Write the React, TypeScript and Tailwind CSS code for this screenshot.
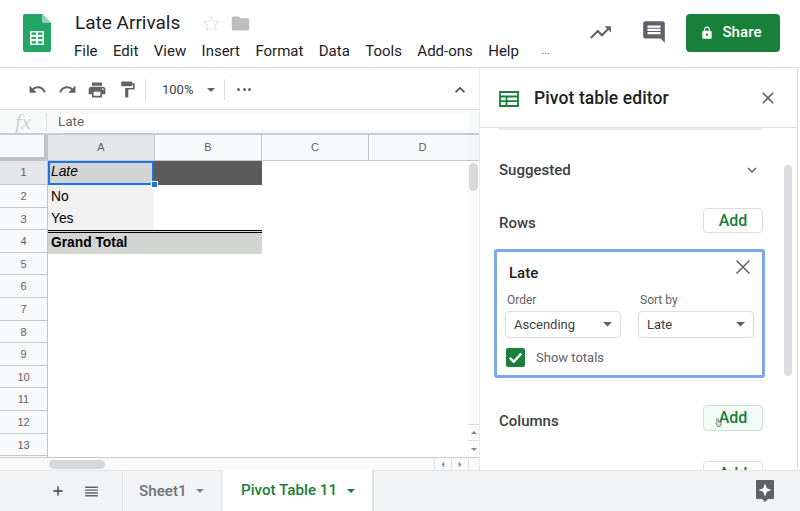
import React from "react";

const Ico = ({ d, className }: { d: string; className: string }) => (
  <svg viewBox="0 0 24 24" fill="currentColor" className={className}>
    <path d={d} />
  </svg>
);

const P = {
  undo: "M12.5 8c-2.65 0-5.05.99-6.9 2.6L2 7v9h9l-3.62-3.62c1.39-1.16 3.16-1.88 5.12-1.88 3.54 0 6.55 2.31 7.6 5.5l2.37-.78C21.08 11.03 17.15 8 12.5 8z",
  redo: "M18.4 10.6C16.55 8.99 14.15 8 11.5 8c-4.65 0-8.58 3.03-9.96 7.22L3.9 16c1.05-3.19 4.05-5.5 7.6-5.5 1.95 0 3.73.72 5.12 1.88L13 16h9V7l-3.6 3.6z",
  print: "M19 8H5c-1.66 0-3 1.34-3 3v6h4v4h12v-4h4v-6c0-1.66-1.34-3-3-3zm-3 11H8v-5h8v5zm3-7c-.55 0-1-.45-1-1s.45-1 1-1 1 .45 1 1-.45 1-1 1zm-1-9H6v4h12V3z",
  paint: "M18 4V3c0-.55-.45-1-1-1H5c-.55 0-1 .45-1 1v4c0 .55.45 1 1 1h12c.55 0 1-.45 1-1V6h1v4H9v11c0 .55.45 1 1 1h2c.55 0 1-.45 1-1v-9h8V4h-3z",
  comment: "M21.99 4c0-1.1-.89-2-1.99-2H4c-1.1 0-2 .9-2 2v12c0 1.1.9 2 2 2h14l4 4-.01-18zM18 14H6v-2h12v2zm0-3H6V9h12v2zm0-3H6V6h12v2z",
  trend: "M16 6l2.29 2.29-4.88 4.88-4-4L2 16.59 3.41 18l6-6 4 4 6.3-6.29L22 12V6z",
  lock: "M18 8h-1V6c0-2.76-2.24-5-5-5S7 3.24 7 6v2H6c-1.1 0-2 .9-2 2v10c0 1.1.9 2 2 2h12c1.1 0 2-.9 2-2V10c0-1.1-.9-2-2-2zm-6 9c-1.1 0-2-.9-2-2s.9-2 2-2 2 .9 2 2-.9 2-2 2zm3.1-9H8.9V6c0-1.71 1.39-3.1 3.1-3.1 1.71 0 3.1 1.39 3.1 3.1v2z",
  folder: "M10 4H4c-1.1 0-2 .9-2 2v12c0 1.1.9 2 2 2h16c1.1 0 2-.9 2-2V8c0-1.1-.9-2-2-2h-8l-2-2z",
  close: "M19 6.41L17.59 5 12 10.59 6.41 5 5 6.41 10.59 12 5 17.59 6.41 19 12 13.41 17.59 19 19 17.59 13.41 12z",
  up: "M12 8l-6 6 1.41 1.41L12 10.83l4.59 4.58L18 14z",
  down: "M16.59 8.59L12 13.17 7.41 8.59 6 10l6 6 6-6z",
  plus: "M19 13h-6v6h-2v-6H5v-2h6V5h2v6h6v2z",
  list: "M3 5h18v2H3zM3 9h18v2H3zM3 13h18v2H3zM3 17h18v2H3z",
};

const Caret = ({ className }: { className: string }) => (
  <svg viewBox="0 0 10 5" fill="currentColor" className={className}>
    <path d="M0 0h10L5 5z" />
  </svg>
);

const SheetsLogo = () => (
  <svg viewBox="0 0 28 38" className="w-[28px] h-[38px]">
    <path d="M2 0h17l9 9v27a2 2 0 0 1-2 2H2a2 2 0 0 1-2-2V2a2 2 0 0 1 2-2z" fill="#22a565" />
    <path d="M19 0l9 9h-7a2 2 0 0 1-2-2z" fill="#8ed1b1" />
    <path d="M7 17h14v14H7z" fill="#f1f9f5" />
    <path d="M8.6 18.6h4.4v2.2H8.6zM15 18.6h4.4v2.2H15zM8.6 22.9h4.4v2.2H8.6zM15 22.9h4.4v2.2H15zM8.6 27.2h4.4v2.2H8.6zM15 27.2h4.4v2.2H15z" fill="#22a565" />
  </svg>
);

const AddBtn = ({ hover, className }: { hover?: boolean; className?: string }) => (
  <div
    className={`w-[60px] h-[25px] rounded-[4px] border flex items-center justify-center text-[16px] font-medium text-[#188038] ${
      hover ? "border-[#c5e6d0] bg-[#f5fbf7]" : "border-[#dadce0] bg-white"
    } ${className ?? ""}`}
  >
    Add
  </div>
);

const Select = ({ label, value }: { label: string; value: string }) => (
  <div className="w-[116px]">
    <div className="text-[12px] leading-[14px] text-[#5f6368] pl-[2px]">{label}</div>
    <div className="mt-[4px] h-[27px] border border-[#dadce0] rounded-[4px] flex items-center justify-between pl-[8px] pr-[8px] text-[13px] text-[#3c4043]">
      <span className="pt-[1px]">{value}</span>
      <Caret className="w-[9px] h-[4.5px] text-[#5f6368]" />
    </div>
  </div>
);

const rowNums = ["1", "2", "3", "4", "5", "6", "7", "8", "9", "10", "11", "12", "13", ""];

const Grid = () => (
  <div className="flex-1 min-h-0 flex overflow-hidden">
    <div className="flex-1 min-w-0 flex flex-col overflow-hidden">
      {/* column headers */}
      <div className="flex h-[26px] shrink-0 text-[11px] font-medium text-[#5f6368] font-['Liberation_Sans',sans-serif]">
        <div className="w-[48px] shrink-0 bg-[#f8f9fa] border-r-[4px] border-b-[4px] border-[#c0c2c5]" />
        <div className="w-[107px] shrink-0 bg-[#e6e7ea] border-b border-r border-[#c4c6c9] flex items-center justify-center">A</div>
        <div className="w-[107px] shrink-0 bg-[#f8f9fa] border-b border-r border-[#c4c6c9] flex items-center justify-center">B</div>
        <div className="w-[107px] shrink-0 bg-[#f8f9fa] border-b border-r border-[#c4c6c9] flex items-center justify-center">C</div>
        <div className="w-[107px] shrink-0 bg-[#f8f9fa] border-b border-[#c4c6c9] flex items-center justify-center">D</div>
      </div>
      {/* rows */}
      <div className="flex-1 min-h-0 overflow-hidden flex">
        <div className="w-[48px] shrink-0 border-r border-[#c4c6c9]">
          {rowNums.map((n, i) => (
            <div
              key={i}
              className={`border-b border-[#c4c6c9] flex items-center justify-center text-[11px] font-medium text-[#5f6368] font-['Liberation_Sans',sans-serif] ${
                i === 0 ? "bg-[#e6e7ea] h-[24px] pb-[1px]" : "bg-[#f8f9fa] h-[22.6px] pt-[1px]"
              }`}
            >
              {n}
            </div>
          ))}
        </div>
        <div className="flex-1 font-['Liberation_Sans',sans-serif] text-[13.8px] text-black">
          <div className="flex h-[24px]">
            <div className="relative w-[106px] bg-[#d3d5d3] border-2 border-[#1a73e8] italic flex items-center pl-[1px] pb-[2px]">
              Late
              <div className="absolute right-[-6px] bottom-[-5px] w-[7px] h-[7px] bg-[#1a73e8] border border-white z-10" />
            </div>
            <div className="w-[108px] bg-[#5b5b5b]" />
          </div>
          <div className="flex h-[22.6px]">
            <div className="w-[106px] bg-[#f1f1f1] flex items-center pl-[3px] pt-[2px]">No</div>
          </div>
          <div className="flex h-[22.6px]">
            <div className="w-[106px] bg-[#f1f1f1] flex items-center pl-[3px]">Yes</div>
          </div>
          <div className="w-[214px] h-[24px] bg-[#d3d5d3] border-t-[3px] border-double border-black flex items-center pl-[3px] pb-[1px] font-bold">
            Grand Total
          </div>
        </div>
      </div>
    </div>
    {/* vertical scrollbar */}
    <div className="w-[11px] shrink-0 bg-[#fbfbfb] flex flex-col">
      <div className="h-[26px] border-b border-[#c4c6c9] bg-[#f3f4f5]" />
      <div className="flex-1 relative">
        <div className="absolute left-[1px] top-[2px] w-[9px] h-[28px] rounded-full bg-[#d6d8da]" />
      </div>
      <div className="h-[16px] border-t border-[#dcdddf] flex items-center justify-center">
        <Caret className="w-[6px] h-[3px] text-[#80868b] rotate-180" />
      </div>
      <div className="h-[17px] border-t border-[#dcdddf] flex items-center justify-center">
        <Caret className="w-[6px] h-[3px] text-[#80868b]" />
      </div>
    </div>
  </div>
);

export default function App() {
  return (
    <div className="w-[800px] h-[511px] overflow-hidden bg-white flex flex-col font-[Roboto,sans-serif] text-[#202124]">
      {/* top bar */}
      <header className="h-[68px] shrink-0 border-b border-[#dadce0] flex">
        <div className="w-[75px] shrink-0 pl-[23px] pt-[14px]">
          <SheetsLogo />
        </div>
        <div className="flex-1 min-w-0 pt-[11px]">
          <div className="flex items-center h-[24px]">
            <span className="text-[19px] leading-[24px] text-[#202124]">Late Arrivals</span>
            <svg viewBox="0 0 24 24" fill="none" stroke="#e3e4e6" strokeWidth="1.4" className="w-[19px] h-[19px] ml-[22px]">
              <path d="M12 3l2.8 6 6.5.8-4.8 4.400 1.300 6.400L12 17.400l-5.800 3.200 1.300-6.400L2.700 9.800 9.200 9z" />
            </svg>
            <Ico d={P.folder} className="w-[21px] h-[21px] ml-[9px] text-[#bdbdbd]" />
          </div>
          <nav className="mt-[4px] -ml-[1px] flex items-center text-[15px] leading-[24px] text-[#202124] gap-[15.4px]">
            <span>File</span>
            <span>Edit</span>
            <span>View</span>
            <span>Insert</span>
            <span>Format</span>
            <span>Data</span>
            <span>Tools</span>
            <span>Add-ons</span>
            <span>Help</span>
            <span className="ml-[7px] text-[11px] text-[#5f6368]">...</span>
          </nav>
        </div>
        <div className="flex items-start pt-[14px] pr-[20px]">
          <Ico d={P.trend} className="w-[25px] h-[25px] text-[#5f6368] mr-[28px] mt-[6px]" />
          <Ico d={P.comment} className="w-[26px] h-[26px] text-[#5f6368] mr-[19px] mt-[5px]" />
          <div className="w-[94px] h-[38px] rounded-[4px] bg-[#188038] text-white flex items-center justify-center gap-[8px] pr-[4px] pb-[1px] text-[15px] font-medium tracking-[0.1px]">
            <Ico d={P.lock} className="w-[14px] h-[14px]" />
            Share
          </div>
        </div>
      </header>

      {/* body */}
      <div className="flex-1 min-h-0 flex">
        <div className="w-[479px] shrink-0 flex flex-col">
          {/* toolbar */}
          <div className="h-[42px] shrink-0 border-b border-[#dadce0] flex items-center pl-[28px] pt-[2px] text-[#5f6368] relative">
            <Ico d={P.undo} className="w-[19px] h-[19px]" />
            <Ico d={P.redo} className="w-[19px] h-[19px] ml-[11px]" />
            <Ico d={P.print} className="w-[20px] h-[20px] ml-[10px]" />
            <Ico d={P.paint} className="w-[19px] h-[19px] ml-[11px]" />
            <div className="w-px h-[21px] bg-[#dadce0] ml-[8px]" />
            <span className="ml-[16px] text-[13px] text-[#3c4043]">100%</span>
            <Caret className="w-[8px] h-[4px] ml-[14px]" />
            <div className="w-px h-[21px] bg-[#dadce0] ml-[9px]" />
            <div className="ml-[12px] flex gap-[2.5px]">
              <div className="w-[3px] h-[3px] rounded-full bg-[#5f6368]" />
              <div className="w-[3px] h-[3px] rounded-full bg-[#5f6368]" />
              <div className="w-[3px] h-[3px] rounded-full bg-[#5f6368]" />
            </div>
            <div className="flex-1" />
            <Ico d={P.up} className="w-[20px] h-[20px] mr-[9px] text-[#3c4043]" />
          </div>
          {/* formula bar */}
          <div className="h-[25px] shrink-0 bg-[#f7f8f8] flex items-center border-b-[2px] border-[#c9cbce] text-[13.5px]">
            <div className="w-[47px] shrink-0 text-center font-['Liberation_Serif',serif] italic text-[22px] text-[#d0d2d4] border-r border-[#dadce0] leading-[18px]">
              fx
            </div>
            <div className="ml-[11px] w-[411px] h-[16px] bg-white flex items-center text-[#5f6368]">Late</div>
          </div>
          <Grid />
          {/* horizontal scrollbar */}
          <div className="h-[13px] shrink-0 border-t border-[#c9cbce] bg-[#fafafa] flex items-center">
            <div className="w-[48px] shrink-0" />
            <div className="w-[56px] h-[9px] rounded-full bg-[#d6d8da] ml-[1px]" />
            <div className="flex-1" />
            <div className="w-[17px] h-full border-l border-[#dcdddf] flex items-center justify-center">
              <Caret className="w-[6px] h-[3px] rotate-90 text-[#80868b]" />
            </div>
            <div className="w-[17px] h-full border-l border-[#dcdddf] flex items-center justify-center">
              <Caret className="w-[6px] h-[3px] -rotate-90 text-[#80868b]" />
            </div>
            <div className="w-[11px] h-full border-l border-[#dcdddf]" />
          </div>
        </div>

        {/* side panel */}
        <aside className="flex-1 min-w-0 relative bg-white border-l border-[#ebebeb] border-r-[#dadce0] border-r overflow-hidden mr-[2px]">
          <div className="h-[60px] border-b border-[#dadce0] flex items-center pl-[19px] pr-[20px]">
            <svg viewBox="0 0 20 16" className="w-[20px] h-[16px] mt-[2px]" fill="none">
              <path d="M1 1h18v14H1z" stroke="#188038" strokeWidth="1.8" />
              <path d="M1 5.5h18M1 10.200h18M7.500 5.500V15" stroke="#188038" strokeWidth="1.8" />
            </svg>
            <span className="ml-[15px] mt-[2px] text-[17.5px] font-medium text-[#202124] tracking-[0.1px]">Pivot table editor</span>
            <div className="flex-1" />
            <Ico d={P.close} className="w-[20px] h-[20px] text-[#5f6368] mr-[-1px]" />
          </div>
          <div className="ml-[18px] w-[265px] h-[2px] rounded-b-[4px] bg-[#e8eaed]" />

          <div className="pl-[19px] w-[283px]">
            <div className="mt-[28px] h-[24px] flex items-center justify-between text-[15px] font-medium text-[#3c4043]">
              <span>Suggested</span>
              <Ico d={P.down} className="w-[18px] h-[18px] text-[#5f6368] mr-[2px]" />
            </div>
            <div className="mt-[26px] h-[25px] flex items-center justify-between text-[15px] font-medium text-[#3c4043]">
              <span className="mt-[6px]">Rows</span>
              <AddBtn />
            </div>

            <div className="mt-[16px] -ml-[5px] w-[271px] h-[129px] rounded-[3px] border-[3px] border-[#7ba7ef] pl-[8px] pr-[8px] relative">
              <div className="pt-[11px] text-[15px] font-medium leading-[20px] pl-[4px] text-[#202124]">Late</div>
              <svg viewBox="0 0 24 24" className="absolute right-[7px] top-[3px] w-[24px] h-[24px]" fill="none" stroke="#5f6368" strokeWidth="1.500">
                <path d="M5.500 5.500l13 13M18.500 5.500l-13 13" />
              </svg>
              <div className="mt-[10px] flex justify-between">
                <Select label="Order" value="Ascending" />
                <Select label="Sort by" value="Late" />
              </div>
              <div className="mt-[10px] ml-[1px] flex items-center">
                <div className="w-[19px] h-[19px] rounded-[2px] bg-[#188038] flex items-center justify-center">
                  <svg viewBox="0 0 24 24" className="w-[17px] h-[17px]" fill="none" stroke="white" strokeWidth="3.400">
                    <path d="M4 12.500l5.500 5.500L20 6.500" />
                  </svg>
                </div>
                <span className="ml-[11px] text-[13px] text-[#5f6368]">Show totals</span>
              </div>
            </div>

            <div className="mt-[2px] h-px -mx-[1px] bg-[#f3f3f3]" />
            <div className="mt-[24px] h-[26px] flex items-center justify-between text-[15px] font-medium text-[#3c4043]">
              <span className="mt-[6px]">Columns</span>
              <div className="relative">
                <AddBtn hover className="!h-[26px]" />
                <svg viewBox="0 0 8 10" className="absolute left-[12px] top-[13px] w-[7px] h-[9px]">
                  <path d="M2 5V1.500a1 1 0 0 1 2 0V4l3 .8V8L6 9.500H3L1 6.500z" fill="#d8d8d8" stroke="#5f6368" strokeWidth="0.8" />
                </svg>
              </div>
            </div>
            <div className="mt-[30px] flex justify-end">
              <AddBtn />
            </div>
          </div>

          {/* panel scrollbar */}
          <div className="absolute right-[5px] top-[97px] w-[8px] h-[211px] rounded-full bg-[#dadce0]" />
        </aside>
      </div>

      {/* bottom tabs */}
      <footer className="h-[41px] shrink-0 bg-[#f1f3f4] border-t border-[#e4e5e7] flex items-stretch relative z-10">
        <div className="w-[122px] shrink-0 flex items-center pl-[50px] text-[#5f6368]">
          <Ico d={P.plus} className="w-[16px] h-[16px] text-[#3c4043]" />
          <Ico d={P.list} className="w-[17px] h-[17px] ml-[17px]" />
        </div>
        <div className="w-[100px] shrink-0 border-l border-r border-[#e3e4e6] flex items-center pl-[16px] text-[15.2px] font-medium text-[#6f7378]">
          Sheet1
          <Caret className="w-[8px] h-[4px] ml-[9px] text-[#80868b]" />
        </div>
        <div className="w-[151px] shrink-0 ml-[1px] bg-white border-r-[2px] border-[#e0e1e3] flex items-center pl-[18px] text-[15.2px] font-medium text-[#188038] -mt-px">
          Pivot Table 11
          <Caret className="w-[8px] h-[4px] ml-[10px]" />
        </div>
        <div className="flex-1" />
        <div className="flex items-center pr-[25px]">
          <svg viewBox="0 0 20 22" className="w-[20px] h-[22px]">
            <path d="M2 0h16a1 1 0 0 1 1 1v17a1 1 0 0 1-1 1h-5l-3 3-3-3H2a1 1 0 0 1-1-1V1a1 1 0 0 1 1-1z" fill="#5f6368" />
            <path d="M10 3.500l1.800 4.700 4.700 1.800-4.700 1.800-1.800 4.700-1.800-4.700L3.500 10l4.700-1.800z" fill="white" />
          </svg>
        </div>
      </footer>
    </div>
  );
}
